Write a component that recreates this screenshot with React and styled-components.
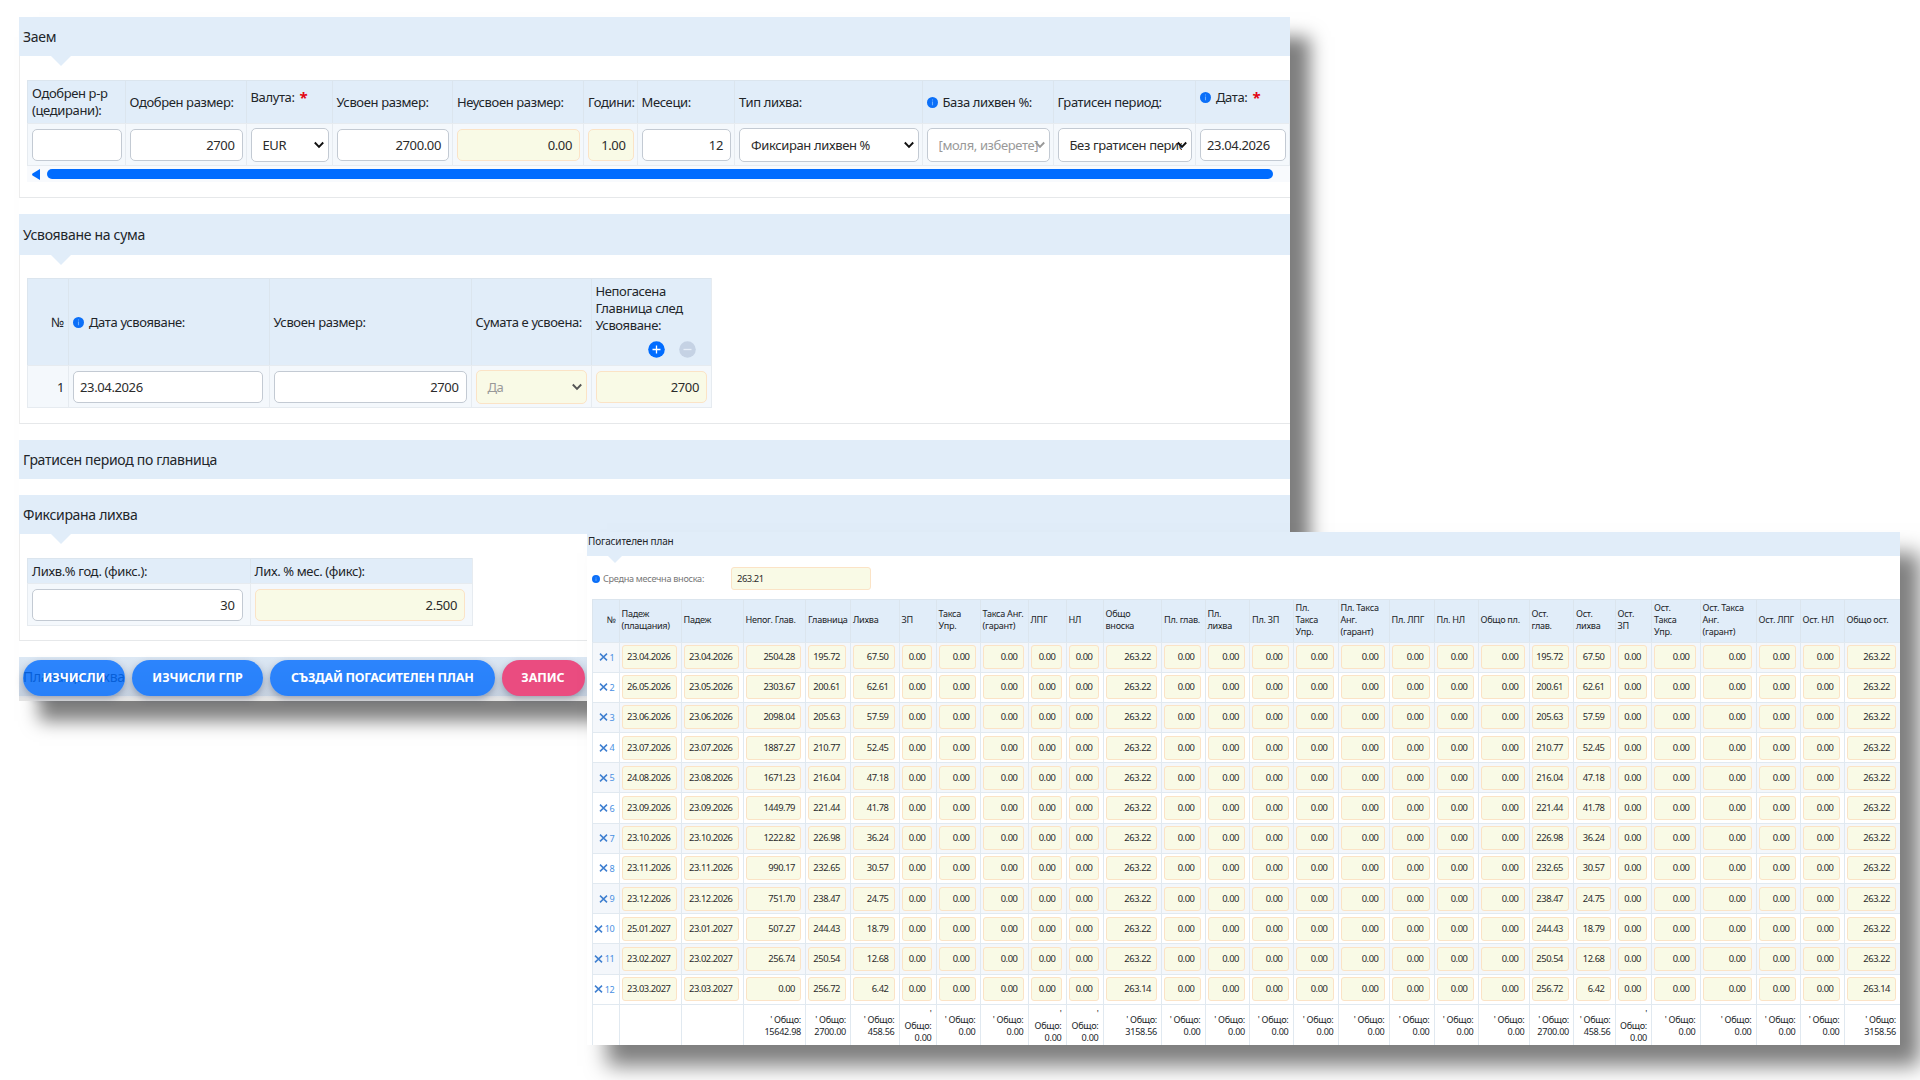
import React from 'react';
import styled, {createGlobalStyle} from 'styled-components';

const GlobalStyle = createGlobalStyle`
    * {
        box-sizing: border-box;
    }
    body {
        margin: 0;
        background: #fff;
        overflow: hidden;
        font-family: "Noto Sans", "Open Sans", sans-serif;
        color: #212529;
    }
`;

const Page = styled.main`
    display: grid;
    width: 1920px;
    height: 1080px;
    overflow: hidden;
`;

const Sheet = styled.div`
    grid-area: 1 / 1;
    position: relative;
    background: #fff;
`;

const LoanSheet = styled(Sheet)`
    width: 1271px;
    height: 684px;
    margin: 17px 0 0 19px;
    box-shadow: 20px 20px 17px rgba(0, 0, 0, 0.51);
    font-size: 13px;
    letter-spacing: -0.37px;
`;

const PlanSheet = styled(Sheet)`
    width: 1313px;
    height: 513px;
    margin: 532px 0 0 587px;
    box-shadow: 20px 21px 20px rgba(0, 0, 0, 0.51);
    font-size: 9.1px;
    letter-spacing: -0.28px;
`;

const Title = styled.h2`
    position: relative;
    display: flex;
    align-items: center;
    height: ${p => p.$h || 39}px;
    margin: 0;
    padding: 0 0 1px 4px;
    background: #e1edf9;
    font-size: 14px;
    font-weight: 400;
    letter-spacing: -0.3px;

    &::after {
        content: '';
        display: ${p => (p.$open ? 'block' : 'none')};
        position: absolute;
        top: 100%;
        left: 32px;
        border: 10px solid transparent;
        border-top-color: #e1edf9;
        border-bottom: 0;
    }
`;

const ClosedTitle = styled(Title)`
    margin-bottom: 16px;
`;

const PlanTitle = styled(Title)`
    padding: 0 0 6px 1px;
    font-size: 10px;
    letter-spacing: -0.16px;

    &::after {
        left: 21px;
        border-width: 7px;
        border-bottom: 0;
    }
`;

const Body = styled.div`
    height: ${p => p.$h}px;
    margin-bottom: 16px;
    padding: ${p => p.$top}px 0 0 7px;
    border-left: 1px solid #ececec;
    border-bottom: 1px solid #e6e8ea;
`;

const Grid = styled.div`
    display: grid;
    grid-template-columns: ${p => p.$cols};
    width: max-content;
    border-right: 1px solid #e6ebf0;
    border-bottom: 1px solid #e6ebf0;
`;

const Head = styled.div`
    display: flex;
    flex-direction: column;
    justify-content: center;
    align-items: ${p => (p.$right ? 'flex-end' : 'flex-start')};
    height: ${p => p.$h}px;
    padding: 0 4px ${p => p.$lift || 0}px;
    border-left: 1px solid #dbe5ee;
    border-top: 1px solid #dbe5ee;
    background: #e1edf9;
    line-height: 17px;
    white-space: nowrap;
`;

const Line = styled.span`
    display: flex;
    align-items: center;
    gap: 5px;
`;

const Star = styled.span`
    color: #e30613;
    font-size: 15px;
    font-weight: 700;
`;

const Cell = styled.div`
    display: flex;
    align-items: center;
    justify-content: flex-end;
    height: ${p => p.$h || 42}px;
    padding: 0 ${p => p.$pad || 4}px 0 4px;
    border-left: 1px solid #e6ebf0;
    border-top: 1px solid #e6ebf0;
    background: #f4f8fc;
`;

const Field = styled.div`
    position: relative;
    display: flex;
    align-items: center;
    justify-content: ${p => (p.$left ? 'flex-start' : 'flex-end')};
    width: 100%;
    height: ${p => (p.$select ? 34 : 32)}px;
    padding: 0 ${p => (p.$select ? 4 : 7)}px 0 ${p => (p.$select ? 11 : 6)}px;
    overflow: hidden;
    border: 1px solid ${p => (p.$locked ? '#fbe3c6' : '#c3cad3')};
    border-radius: 5px;
    background: ${p => (p.$locked ? '#f9fae6' : '#fff')};
    color: ${p => (p.$muted ? '#999' : '#2b2b2b')};
    white-space: nowrap;

    svg {
        position: absolute;
        right: 4px;
        top: 50%;
        margin-top: -5px;
    }
`;

const Choice = styled.span`
    flex: 1;
    overflow: hidden;
    margin-right: 5px;
`;

const Rail = styled.div`
    display: flex;
    align-items: center;
    height: 16px;
    padding-left: 5px;
    gap: 7px;
    background: #f8fafd;
`;

const Thumb = styled.div`
    width: 1226px;
    height: 10px;
    border-radius: 5px;
    background: #006cff;
`;

const Tools = styled.div`
    display: flex;
    align-self: flex-end;
    gap: 14px;
    margin-top: 7px;
    padding-right: 11px;
`;

const Actions = styled.div`
    position: absolute;
    left: 0;
    bottom: 0;
    display: flex;
    gap: 7px;
    width: 568px;
    height: 44px;
    padding: 3px 0 0 4px;
    background: linear-gradient(rgba(100, 110, 130, 0.04), rgba(100, 110, 130, 0.22) 40px, #e3e3e3 41px);
`;

const Button = styled.button`
    width: ${p => p.$w}px;
    height: 36px;
    padding: 0 0 1px;
    border: 0;
    border-radius: 18px;
    background: ${p => (p.$save ? '#ea4c80' : 'rgba(0, 108, 255, 0.8)')};
    box-shadow: 0 3px 7px rgba(40, 50, 80, 0.35);
    color: #fff;
    font: 700 12.5px "Noto Sans", sans-serif;
    letter-spacing: ${p => (p.$tight ? -0.25 : -0.05)}px;
    white-space: nowrap;
`;

const Average = styled.div`
    display: flex;
    align-items: center;
    height: 43px;
    padding: 3px 0 0 5px;
    gap: 3px;
    color: #777;
`;

const AverageLabel = styled.span`
    width: 125px;
`;

const PlanField = styled(Field)`
    width: ${p => (p.$w ? p.$w + 'px' : '100%')};
    height: ${p => (p.$w ? 23 : 24)}px;
    padding: 0 5px 1px;
    border-radius: 3px;
    font-size: 9.4px;
    letter-spacing: -0.44px;
`;

const PlanGrid = styled(Grid)`
    width: 1308px;
    margin-left: 5px;
    border: 0;
`;

const PlanHead = styled(Head)`
    padding: 0 3px 1px 2px;
    line-height: 12px;
`;

const PlanCell = styled(Cell)`
    height: 30.2px;
    padding: 0 4px 0 2px;
    border-color: #e1e9f0;
    background: ${p => (p.$odd ? '#f4f7fb' : '#fff')};
`;

const RowNo = styled.span`
    display: flex;
    align-items: center;
    gap: 2px;
    color: #4a90e2;
`;

const Total = styled(PlanCell)`
    flex-direction: column;
    justify-content: center;
    align-items: flex-end;
    height: 41px;
    padding-top: 3px;
    line-height: 12px;
    white-space: nowrap;
`;

const Chevron = ({color = '#111'}) => (
    <svg width="10" height="10" viewBox="0 0 10 10" fill="none" stroke={color} strokeWidth="1.9">
        <path d="M0.8 2.5 L5 6.9 L9.2 2.5" />
    </svg>
);

const Info = ({size = 11}) => (
    <svg width={size} height={size} viewBox="0 0 12 12">
        <circle cx="6" cy="6" r="6" fill="#0b6ff8" />
        <path d="M6 5v4M6 2.8v1.1" stroke="#6fb0ff" strokeWidth="1.2" />
    </svg>
);

const Round = ({minus}) => (
    <svg width="17" height="17" viewBox="0 0 17 17">
        <circle cx="8.5" cy="8.5" r="8.3" fill={minus ? '#c5d2e4' : '#006cff'} />
        <path d={minus ? 'M4.5 8.5h8' : 'M4.5 8.5h8M8.5 4.5v8'} stroke={minus ? '#e6eef8' : '#fff'} strokeWidth="1.3" />
    </svg>
);

const Cross = () => (
    <svg width="9" height="8" viewBox="0 0 9 8" stroke="#3f7fd0" strokeWidth="1.5">
        <path d="M1 0.6 L8 7.4 M8 0.6 L1 7.4" />
    </svg>
);

const loan = [
    {head: ['Одобрен р-р', '(цедирани):'], value: ''},
    {head: ['Одобрен размер:'], value: '2700'},
    {head: ['Валута:'], value: 'EUR', select: true, star: true},
    {head: ['Усвоен размер:'], value: '2700.00'},
    {head: ['Неусвоен размер:'], value: '0.00', locked: true},
    {head: ['Години:'], value: '1.00', locked: true},
    {head: ['Месеци:'], value: '12'},
    {head: ['Тип лихва:'], value: 'Фиксиран лихвен %', select: true},
    {head: ['База лихвен %:'], value: '[моля, изберете]', select: true, muted: true, info: true},
    {head: ['Гратисен период:'], value: 'Без гратисен период', select: true},
    {head: ['Дата:'], value: '23.04.2026', left: true, star: true, info: true},
];

const heads = [
    '№', 'Падеж|(плащания)', 'Падеж', 'Непог. Глав.', 'Главница', 'Лихва', 'ЗП', 'Такса|Упр.',
    'Такса Анг.|(гарант)', 'ЛПГ', 'НЛ', 'Общо|вноска', 'Пл. глав.', 'Пл.|лихва', 'Пл. ЗП',
    'Пл.|Такса|Упр.', 'Пл. Такса|Анг.|(гарант)', 'Пл. ЛПГ', 'Пл. НЛ', 'Общо пл.', 'Ост.|глав.',
    'Ост.|лихва', 'Ост.|ЗП', 'Ост.|Такса|Упр.', 'Ост. Такса|Анг.|(гарант)', 'Ост. ЛПГ', 'Ост. НЛ', 'Общо ост.',
];

const planCols = [
    26.5, 62, 62, 62.5, 45, 48.5, 37, 44, 48, 38, 37, 58.5, 43.5, 44.5, 43.5,
    45, 51, 45, 44, 51, 44.5, 41.5, 36.5, 48.5, 56, 44, 44, 56.5,
];

// paid on, due on, outstanding, principal, interest, instalment
const plan = [
    ['23.04.2026', '23.04.2026', '2504.28', '195.72', '67.50', '263.22'],
    ['26.05.2026', '23.05.2026', '2303.67', '200.61', '62.61', '263.22'],
    ['23.06.2026', '23.06.2026', '2098.04', '205.63', '57.59', '263.22'],
    ['23.07.2026', '23.07.2026', '1887.27', '210.77', '52.45', '263.22'],
    ['24.08.2026', '23.08.2026', '1671.23', '216.04', '47.18', '263.22'],
    ['23.09.2026', '23.09.2026', '1449.79', '221.44', '41.78', '263.22'],
    ['23.10.2026', '23.10.2026', '1222.82', '226.98', '36.24', '263.22'],
    ['23.11.2026', '23.11.2026', '990.17', '232.65', '30.57', '263.22'],
    ['23.12.2026', '23.12.2026', '751.70', '238.47', '24.75', '263.22'],
    ['25.01.2027', '23.01.2027', '507.27', '244.43', '18.79', '263.22'],
    ['23.02.2027', '23.02.2027', '256.74', '250.54', '12.68', '263.22'],
    ['23.03.2027', '23.03.2027', '0.00', '256.72', '6.42', '263.14'],
];

const zeros = n => Array(n).fill('0.00');

const expand = ([paid, due, rest, principal, interest, sum]) => [
    paid, due, rest, principal, interest, ...zeros(5), sum, ...zeros(8), principal, interest, ...zeros(5), sum,
];

const totals = expand(['', '', '15642.98', '2700.00', '458.56', '3158.56']);
// columns too narrow to keep the quote mark on the same line
const narrow = [5, 8, 9, 21];

class App extends React.Component {
    render() {
        return (
            <Page>
                <GlobalStyle />
                <LoanSheet>
                    <Title $open>Заем</Title>
                    <Body $h={142} $top={24}>
                        <Grid $cols="97.5px 121px 86px 120.5px 131px 53.5px 97.5px 187.5px 131px 142.5px 94px">
                            {loan.map(c => (
                                <Head key={c.head[0]} $h={43} $lift={c.star ? 9 : 0}>
                                    {c.head.map(t => (
                                        <Line key={t}>
                                            {c.info && <Info />}
                                            {t}
                                            {c.star && <Star>*</Star>}
                                        </Line>
                                    ))}
                                </Head>
                            ))}
                            {loan.map(c => (
                                <Cell key={c.head[0]} $h={42} $pad={3}>
                                    <Field $select={c.select} $left={c.select || c.left} $locked={c.locked} $muted={c.muted}>
                                        {c.select ? <Choice>{c.value}</Choice> : c.value}
                                        {c.select && <Chevron color={c.muted ? '#999' : '#111'} />}
                                    </Field>
                                </Cell>
                            ))}
                        </Grid>
                        <Rail>
                            <svg width="8" height="11" viewBox="0 0 8 11">
                                <path d="M8 0v11L0.5 6.5Q-0.3 5.5 0.5 4.5Z" fill="#006cff" />
                            </svg>
                            <Thumb />
                        </Rail>
                    </Body>

                    <Title $open $h={41}>Усвояване на сума</Title>
                    <Body $h={169} $top={23}>
                        <Grid $cols="41px 200.5px 202px 120px 120.5px">
                            <Head $h={87} $right>№</Head>
                            <Head $h={87}><Line><Info />Дата усвояване:</Line></Head>
                            <Head $h={87}>Усвоен размер:</Head>
                            <Head $h={87}>Сумата е усвоена:</Head>
                            <Head $h={87} $lift={4}>
                                <Line>Непогасена</Line>
                                <Line>Главница след</Line>
                                <Line>Усвояване:</Line>
                                <Tools>
                                    <Round />
                                    <Round minus />
                                </Tools>
                            </Head>
                            <Cell>1</Cell>
                            <Cell $pad={6}><Field $left>23.04.2026</Field></Cell>
                            <Cell><Field>2700</Field></Cell>
                            <Cell><Field $left $select $locked $muted>Да<Chevron color="#555" /></Field></Cell>
                            <Cell><Field $locked>2700</Field></Cell>
                        </Grid>
                    </Body>

                    <ClosedTitle>Гратисен период по главница</ClosedTitle>
                    <Title $open>Фиксирана лихва</Title>
                    <Body $h={107} $top={24}>
                        <Grid $cols="222.5px 222.5px">
                            <Head $h={25}>Лихв.% год. (фикс.):</Head>
                            <Head $h={25}>Лих. % мес. (фикс):</Head>
                            <Cell $h={42} $pad={7}><Field>30</Field></Cell>
                            <Cell $h={42} $pad={7}><Field $locked>2.500</Field></Cell>
                        </Grid>
                    </Body>
                    <Title>Плаваща лихва</Title>
                    <Actions>
                        <Button $w={102}>ИЗЧИСЛИ</Button>
                        <Button $w={131}>ИЗЧИСЛИ ГПР</Button>
                        <Button $w={224.5} $tight>СЪЗДАЙ ПОГАСИТЕЛЕН ПЛАН</Button>
                        <Button $w={83} $save>ЗАПИС</Button>
                    </Actions>
                </LoanSheet>

                <PlanSheet>
                    <PlanTitle $open $h={23.5}>Погасителен план</PlanTitle>
                    <Average>
                        <Info size={8} />
                        <AverageLabel>Средна месечна вноска:</AverageLabel>
                        <PlanField $w={140} $left $locked>263.21</PlanField>
                    </Average>
                    <PlanGrid $cols={planCols.map(w => w + 'px').join(' ')}>
                        {heads.map((h, i) => (
                            <PlanHead key={h + i} $h={43} $right={i === 0}>
                                {h.split('|').map(t => <Line key={t}>{t}</Line>)}
                            </PlanHead>
                        ))}
                        {plan.map((row, r) => (
                            <React.Fragment key={r}>
                                <PlanCell $odd={r % 2 === 0}>
                                    <RowNo><Cross />{r + 1}</RowNo>
                                </PlanCell>
                                {expand(row).map((v, i) => (
                                    <PlanCell key={i} $odd={r % 2 === 0}>
                                        <PlanField $locked>{v}</PlanField>
                                    </PlanCell>
                                ))}
                            </React.Fragment>
                        ))}
                        <Total />
                        {totals.map((v, i) => (
                            <Total key={i}>
                                {v && narrow.includes(i) && <Line>'</Line>}
                                {v && <Line>{narrow.includes(i) ? 'Общо:' : "' Общо:"}</Line>}
                                <Line>{v}</Line>
                            </Total>
                        ))}
                    </PlanGrid>
                </PlanSheet>
            </Page>
        );
    }
}

export default App;
